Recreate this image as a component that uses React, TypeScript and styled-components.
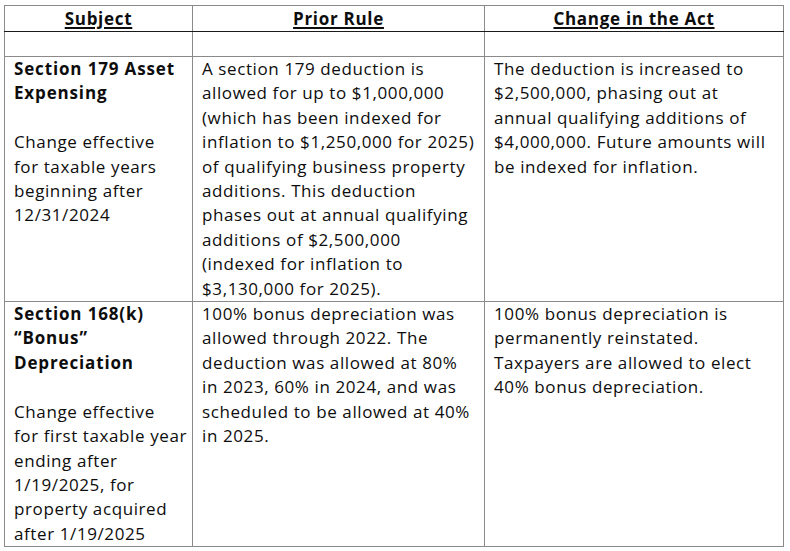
import React from 'react';
import styled, { createGlobalStyle } from 'styled-components';

const GlobalStyle = createGlobalStyle`
  html, body {
    margin: 0;
    padding: 0;
    background: #ffffff;
  }
  body {
    font-family: 'Open Sans', 'Noto Sans', sans-serif;
    color: #0d0d0d;
  }
`;

type Row = {
  id: number;
  title: string[];
  effective: string[];
  prior: string[];
  change: string[];
};

const rows: Row[] = [
  {
    id: 1,
    title: ['Section 179 Asset', 'Expensing'],
    effective: ['Change effective', 'for taxable years', 'beginning after', '12/31/2024'],
    prior: [
      'A section 179 deduction is',
      'allowed for up to $1,000,000',
      '(which has been indexed for',
      'inflation to $1,250,000 for 2025)',
      'of qualifying business property',
      'additions. This deduction',
      'phases out at annual qualifying',
      'additions of $2,500,000',
      '(indexed for inflation to',
      '$3,130,000 for 2025).',
    ],
    change: [
      'The deduction is increased to',
      '$2,500,000, phasing out at',
      'annual qualifying additions of',
      '$4,000,000. Future amounts will',
      'be indexed for inflation.',
    ],
  },
  {
    id: 2,
    title: ['Section 168(k)', '\u201CBonus\u201D', 'Depreciation'],
    effective: [
      'Change effective',
      'for first taxable year',
      'ending after',
      '1/19/2025, for',
      'property acquired',
      'after 1/19/2025',
    ],
    prior: [
      '100% bonus depreciation was',
      'allowed through 2022. The',
      'deduction was allowed at 80%',
      'in 2023, 60% in 2024, and was',
      'scheduled to be allowed at 40%',
      'in 2025.',
    ],
    change: [
      '100% bonus depreciation is',
      'permanently reinstated.',
      'Taxpayers are allowed to elect',
      '40% bonus depreciation.',
    ],
  },
];

const Lines = ({ lines }: { lines: string[] }) => (
  <>
    {lines.map((line, i) => (
      <Line key={i}>{line}</Line>
    ))}
  </>
);

const App = () => {
  return (
    <Page>
      <GlobalStyle />
      <Table>
        <colgroup>
          <col style={{ width: 188 }} />
          <col style={{ width: 292 }} />
          <col style={{ width: 299 }} />
        </colgroup>
        <thead>
          <tr>
            <HeadCell>Subject</HeadCell>
            <HeadCell>Prior Rule</HeadCell>
            <HeadCell>Change in the Act</HeadCell>
          </tr>
        </thead>
        <tbody>
          <tr>
            <EmptyCell />
            <EmptyCell />
            <EmptyCell />
          </tr>
          {rows.map((row) => (
            <tr key={row.id}>
              <Cell>
                <Title>
                  <Lines lines={row.title} />
                </Title>
                <Line>&nbsp;</Line>
                <Lines lines={row.effective} />
              </Cell>
              <Cell>
                <Lines lines={row.prior} />
              </Cell>
              <Cell>
                <Lines lines={row.change} />
              </Cell>
            </tr>
          ))}
        </tbody>
      </Table>
    </Page>
  );
};

export default App;

const Page = styled.div`
  padding: 5px 0 0 4px;
`;

const Table = styled.table`
  width: 779px;
  border-collapse: collapse;
  table-layout: fixed;
  border: 1px solid #8a8a8a;
`;

const HeadCell = styled.th`
  height: 25px;
  padding: 0 9px;
  border-left: 1px solid #8a8a8a;
  border-right: 1px solid #8a8a8a;
  border-bottom: 1.5px solid #1a1a1a;
  font-size: 17px;
  font-weight: 700;
  letter-spacing: 0.7px;
  text-align: center;
  text-decoration: underline;
  text-decoration-thickness: 1.5px;
  text-underline-offset: 2px;
  vertical-align: middle;
`;

const EmptyCell = styled.td`
  height: 24px;
  padding: 0;
  border: 1px solid #8a8a8a;
`;

const Cell = styled.td`
  padding: 0 9px;
  border: 1px solid #8a8a8a;
  vertical-align: top;
  font-size: 17px;
  line-height: 24.4px;
  letter-spacing: 0.6px;
`;

const Title = styled.div`
  font-weight: 700;
  letter-spacing: 0.85px;
`;

const Line = styled.div`
  white-space: nowrap;
`;
